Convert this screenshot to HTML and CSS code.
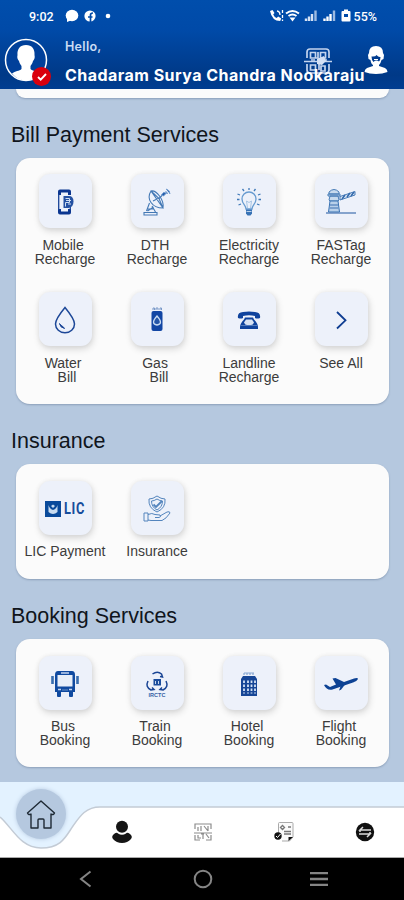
FILE: index.html
```html
<!DOCTYPE html>
<html lang="en">
<head>
  <meta charset="UTF-8">
  <meta name="viewport" content="width=device-width, initial-scale=1.0">
  <title>Services</title>
  <link rel="stylesheet" href="styles.css">
</head>
<body>
  <header>
    <div class="status">
      <span class="time">9:02</span>
      <svg class="notice" width="48" height="14" viewBox="0 0 48 14">
        <ellipse cx="7" cy="6.5" rx="6.3" ry="5.8" fill="#fff"/>
        <path d="M2 9v4l5-2z" fill="#fff"/>
        <circle cx="25" cy="7" r="5.6" fill="#fff"/>
        <path d="M25.500 13V6q0-2 2.500-2M23 8h4.500" fill="none" stroke="#004aa8" stroke-width="1.700"/>
        <circle cx="43" cy="7" r="2.300" fill="#fff"/>
      </svg>
      <svg class="signal" width="84" height="16" viewBox="0 0 84 16">
        <path d="M1 3l2.500-1 2 3-1.300 1.500q1 2.500 3.500 3.500l1.500-1.500 3 2-1 2.500Q3 13 1 3z" fill="#fff"/>
        <path d="M8 3q3 .5 3 4M13.500 2v3M13.500 7v3M13.500 11.500v1.500" fill="none" stroke="#fff" stroke-width="1.300"/>
        <path d="M17 5.500q6.500-5 13 0M19.500 8q4-3 8 0" fill="none" stroke="#fff" stroke-width="2"/>
        <path d="M20.500 9.500h6l-3 4z" fill="#fff"/>
        <path d="M37 13v-2.500M40 13V8.500M43 13V6" stroke="#d5e2f5" stroke-width="2.400"/>
        <path d="M46.500 13V2.500M65 13V2.500" stroke="#9dbbe2" stroke-width="2.400"/>
        <path d="M55.500 13v-2.500M58.500 13V8.500M61.500 13V6" stroke="#fff" stroke-width="2.400"/>
        <path d="M75 1.500h4V3h1.500q1 0 1 1v8.500q0 1-1 1h-7q-1 0-1-1V4q0-1 1-1H75z" fill="#fff"/>
        <path d="M75 6h4v3h-4z" fill="#004aa8"/>
      </svg>
      <span class="battery">55%</span>
    </div>
    <div class="user">
      <div class="avatar">
        <svg width="44" height="44" viewBox="0 0 44 44">
          <circle cx="22" cy="22" r="20.500" fill="#00409a" stroke="#fff" stroke-width="1.500"/>
          <path d="M22 7c-6 0-9 4-8.500 10-.8 3 .5 5 1.500 6 .7 3 2 4 2.500 5v3c-2 2-6.500 2-9.500 4.500Q14 42.500 22 42.500T36 35.500c-3-2.500-7.500-2.500-9.500-4.500v-3c.5-1 1.800-2 2.500-5 1-1 2.300-3 1.500-6C31 11 28 7 22 7z" fill="#fff"/>
        </svg>
        <span class="badge"><svg width="12" height="12" viewBox="0 0 12 12"><path d="M2 6l2.700 2.700L10 3" fill="none" stroke="#fff" stroke-width="1.900"/></svg></span>
      </div>
      <div class="hello">
        <p>Hello,</p>
        <h1>Chadaram Surya Chandra Nookaraju</h1>
      </div>
      <svg class="scan" width="30" height="28" viewBox="0 0 30 28">
        <g fill="none" stroke="#c3d4ee" stroke-width="1.700">
          <path d="M4 11V5q0-3 3-3h16q3 0 3 3v6M26 17v6q0 3-3 3H7q-3 0-3-3v-6M1 14.500h28"/>
          <path d="M7.500 5.500h5V11h-5zM17.500 5.500h5V11h-5zM7.500 18h5v5h-5zM15 5v6h-3M15 11l4 3M8 13h4M20 13h4M16 17v6M18 19h4v5h-4z"/>
        </g>
        <path d="M14 12l7-3 2 5-4 4-5-1z" fill="#d3e0f4"/>
      </svg>
      <svg class="support" width="24" height="28" viewBox="0 0 24 28">
        <path d="M12 0q7 0 7 7l1 2-.5 4-2 1q-1 4-2.500 5v1l6 2q2.500 1.500 2.500 4-5 2-11.500 2T.5 26q0-2.500 2.500-4l6-2v-1q-2-1-2.500-5l-2-1L4 9l1-2q0-7 7-7z" fill="#fff"/>
        <path d="M7.500 10.500q4 .5 5-1.500 2 2.500 4 2 0 3-1.500 4.500-3-2-5.500.500Q7.500 14 7.500 10.500z" fill="#003c8f"/>
        <path d="M10 13.500h4" stroke="#fff"/>
      </svg>
    </div>
  </header>

  <main>
    <div class="card prev"></div>

    <h2>Bill Payment Services</h2>
    <section class="card bills">
      <div class="item">
        <span class="tile"><svg width="30" height="30" viewBox="0 0 30 30">
          <path d="M8 8V4.500Q8 2.500 10 2.500h9q2 0 2 2V8M8 22v3.500q0 2 2 2h9q2 0 2-2V22" fill="#0b3690"/>
          <path d="M11 5.500h7v19h-7z" fill="#edf2fa"/>
          <path d="M8.700 7v16M20.300 20v3" stroke="#174297" stroke-width="1.300"/>
          <path d="M13.500 9H19q4.500 0 4.500 5.500t-5 6.500h-5z" fill="#2451a2"/>
          <path d="M15.500 11.500h4v4h-4v4M16 13.500h5M18 17h3" fill="none" stroke="#cfdef1"/>
        </svg></span>
        <p>Mobile 
Recharge</p>
      </div>
      <div class="item">
        <span class="tile"><svg width="30" height="30" viewBox="0 0 30 30">
          <g fill="none" stroke="#4479b5" stroke-width="1.100">
            <path d="M9 4c-5 8 1 17 12 17zM9 4q4-1 8.500 5t3.500 12M9 4l8 7.500L21 21M11 14l6-3"/>
            <path d="M17 11.500l4-4M7.500 16l-3 8M10 19l3.500 6M5 22h7M2 25.500h13v2.500H2zM5.500 24l6-4"/>
          </g>
          <path d="M19.500 8l2-2.500 3 .5-3 3zM24 2q4 1 4 5M23.500 4.500q2 .5 2 2.500" fill="#1c56a8" stroke="#6f9bce"/>
        </svg></span>
        <p>DTH 
Recharge</p>
      </div>
      <div class="item">
        <span class="tile"><svg width="30" height="30" viewBox="0 0 30 30">
          <path d="M12 22c0-4-4-5-4-10a7 7 0 0 1 14 0c0 5-4 6-4 10z" fill="none" stroke="#679bd0" stroke-width="1.300"/>
          <path d="M12 22.500h6v4l-1.500 2h-3L12 26.500z" fill="#3973b6"/>
          <path d="M12.500 24.500h5" stroke="#bcd2eb"/>
          <path d="M13.500 21l-1-7 2.500 1.500 2.500-1.500-1 7" fill="none" stroke="#a8c5e4"/>
          <path d="M15 3V1M10 4L8.500 2M20 4l1.500-2M6 8L3.500 7M24 8l2.500-1M5.500 12.500H3M24.500 12.500H27M7 17l-2.500 1M23 17l2.500 1" stroke="#3e78b8" stroke-width="1.300"/>
        </svg></span>
        <p>Electricity
Recharge</p>
      </div>
      <div class="item">
        <span class="tile"><svg width="34" height="30" viewBox="0 0 34 30">
          <path d="M5 5q5-5 10 0v2H5zM4 7h12v2H4zM6 9h8l1 4-1 1H6l-1-1z" fill="#c8dbee" stroke="#477cb7"/>
          <path d="M6 14h8l1.500 11H4.500z" fill="#b8d0ea" stroke="#3972b3"/>
          <path d="M6 18h8M5.500 21h9" stroke="#648fc4" stroke-width="1.500"/>
          <path d="M16 9.500l15-5v3.500l-15 5z" fill="#dce8f5" stroke="#386fb0" stroke-width=".9"/>
          <path d="M18 12l3-4M23 10l3-4M27 9l3-4" stroke="#3269ac" stroke-width="1.500"/>
          <path d="M2 26h30" stroke="#4c79b5" stroke-width="1.300"/>
        </svg></span>
        <p>FASTag
Recharge</p>
      </div>
      <div class="item">
        <span class="tile"><svg width="30" height="30" viewBox="0 0 30 30">
          <path d="M15 2.500Q5.500 14 5.500 19a9.500 8.800 0 0 0 19 0Q24.500 14 15 2.500z" fill="none" stroke="#1c4797" stroke-width="1.500"/>
          <path d="M9.500 18.500q.5 4 5 5-1-1.800-2.500-2.500t-2.500-2.500z" fill="#1c4797" stroke="#1c4797"/>
        </svg></span>
        <p>Water 
 Bill</p>
      </div>
      <div class="item">
        <span class="tile"><svg width="30" height="30" viewBox="0 0 30 30">
          <path d="M9.500 8q0-2 2-2h7q2 0 2 2v16q0 2-2 2h-7q-2 0-2-2z" fill="#1246a4"/>
          <path d="M11 5V3h1.500v2M14 5V3h2v2M18 5V3h1.500v2" fill="none" stroke="#7898c8"/>
          <path d="M15 11q-7 8 0 9 7-1 0-9z" fill="#2455a8" stroke="#c9dcf3" stroke-width="1.300"/>
        </svg></span>
        <p>Gas 
 Bill</p>
      </div>
      <div class="item">
        <span class="tile"><svg width="30" height="30" viewBox="0 0 30 30">
          <path d="M4 13q-1-5.500 5-6 6-1 12 0 6 .5 5 6-3 1-5 0v-2q-6-1.500-12 0v2q-2 1-5 0z" fill="#0f439d"/>
          <path d="M11 12.500h8l1 2q4 4 4 7.500v2H6v-2q0-3.500 4-7.500z" fill="#0f439d"/>
          <path d="M12 14.500h6l2 3q-1 2.500-3 2.500h-4q-2 0-3-2.500z" fill="#d8e3f3"/>
          <path d="M6.500 20.500h17" stroke="#7092c8" stroke-width=".7"/>
        </svg></span>
        <p>Landline
Recharge</p>
      </div>
      <div class="item">
        <span class="tile"><svg width="30" height="30" viewBox="0 0 30 30">
          <path d="M11 7l8.500 8.300L11 23.500" fill="none" stroke="#0f3d91" stroke-width="1.800"/>
        </svg></span>
        <p>See All</p>
      </div>
    </section>

    <h2>Insurance</h2>
    <section class="card insurance">
      <div class="item">
        <span class="tile lic"><svg width="16" height="16" viewBox="0 0 16 16">
          <path d="M0 0h16v16H0z" fill="#094a9b"/>
          <path d="M3.500 4q1 4 4.500 5 3.500-1 4.500-5v7q-4.500 4-9 0zM6 5l2-1.500L10 5l-2 2z" fill="#c9dcf0"/>
        </svg><b>LIC</b></span>
        <p>LIC Payment</p>
      </div>
      <div class="item">
        <span class="tile"><svg width="30" height="30" viewBox="0 0 30 30">
          <g fill="none" stroke="#5485bd">
            <path d="M15 2q4 3 8 3 1 9-8 13Q6 14 7 5q4 0 8-3zM15 5q3 2 5.500 2 0 6-5.500 9-5.500-3-5.500-9Q12 7 15 5z"/>
            <path d="M11.500 10.500l2.500 2.500 6-6" stroke-width="1.800"/>
            <path d="M2 19h4v8H2zM6 20.500q4-2 7 0l5 .5q1.500 2-1 2.500h-4M18 22l7-4q3-1 3 1-4 6-8 7.500H9l-3-.5"/>
          </g>
        </svg></span>
        <p>Insurance</p>
      </div>
    </section>

    <h2>Booking Services</h2>
    <section class="card booking">
      <div class="item">
        <span class="tile"><svg width="30" height="30" viewBox="0 0 30 30">
          <path d="M8 2h14q3 0 3 4v17H5V6q0-4 3-4zM7 23h4v4q0 1-1 1H8q-1 0-1-1zM19 23h4v4q0 1-1 1h-2q-1 0-1-1z" fill="#104aa0"/>
          <path d="M7.500 6h15v11.500h-15z" fill="#e8eff9"/>
          <path d="M11 4h8M8 20.500h3M19 20.500h3" stroke="#c2d5ef" stroke-width="1.500"/>
          <path d="M2.500 7v8M27.500 7v8" stroke="#386dae" stroke-width="2.600"/>
          <path d="M12 21h6" stroke="#6a91c5"/>
        </svg></span>
        <p>Bus 
Booking</p>
      </div>
      <div class="item">
        <span class="tile"><svg width="30" height="30" viewBox="0 0 30 30">
          <path d="M10.500 5q5-3.500 9 0l1 3-2.500-.5M6 12q-3 6 3 9l3-.5-2-2M24 12q3 6-3 9l-3-.5 2-2" fill="none" stroke="#194494" stroke-width="1.500"/>
          <path d="M11.500 10h7.500v6.500h-7.500z" fill="#1b4d9d"/>
          <path d="M13.500 12v3M16.500 12v3" stroke="#c8d9ef"/>
          <text x="15" y="28" text-anchor="middle" class="irctc">IRCTC</text>
        </svg></span>
        <p>Train 
Booking</p>
      </div>
      <div class="item">
        <span class="tile"><svg width="30" height="30" viewBox="0 0 30 30">
          <path d="M9 7h12l2 3v17H7V10z" fill="#174696"/>
          <path d="M10 6V4M13 6V4M16 6V4M19 6V4M10 4h10" fill="none" stroke="#87a7d2" stroke-width="1.200"/>
          <path d="M10 11.500v13M14 11.500v13M17.500 11.500v13M21 11.500v13" stroke="#d5e3f5" stroke-width="1.800" stroke-dasharray="2.500 1.500"/>
        </svg></span>
        <p>Hotel 
Booking</p>
      </div>
      <div class="item">
        <span class="tile"><svg width="36" height="30" viewBox="0 0 36 30">
          <path d="M1 16l2-.5 4 2.500 6-2.500-3.500-6 3-.5 8.500 4 10-3.500q4-1 4 .5-1 2-5 3.500L9.500 20.500Q4 22 1 16z" fill="#0d4294"/>
          <path d="M18 16l-2 5.500 2-.7 5-6.500z" fill="#0d4294"/>
        </svg></span>
        <p>Flight 
Booking</p>
      </div>
    </section>
  </main>

  <nav>
    <svg class="curve" width="404" height="75" viewBox="0 0 404 75">
      <path d="M0 35C12 45 20 66 41 66S66 54 73 44 86 25 100 25H404V75H0z" fill="#fff"/>
      <path d="M0 35C12 45 20 66 41 66S66 54 73 44 86 25 100 25H404" fill="none" stroke="#c3cbd5" stroke-width="1.500"/>
    </svg>
    <a class="home"><svg width="32" height="32" viewBox="0 0 32 32">
      <path d="M16 3L2.500 15q1 2.500 3.500 1v14h7V22q0-1 1-1h4q1 0 1 1v8h7V16q2.500 1.500 3.500-1z" fill="none" stroke="#1e2934" stroke-width="1.400" stroke-linejoin="round"/>
    </svg></a>
    <a><svg width="22" height="24" viewBox="0 0 22 24">
      <circle cx="11" cy="6.800" r="6" fill="#151515"/>
      <path d="M3 14q3-2 4-.5 4 2.500 8 0 1-1.500 4 .5 3 2.500 1 5-3.500 4-9 4t-9-4q-2-2.500 1-5z" fill="#151515"/>
    </svg></a>
    <a><svg width="20" height="20" viewBox="0 0 20 20">
      <path d="M2 7V2h5M7 2h11v5M18 13v5h-5M7 18H2v-5M1 11h18M5 5v4M8 4v5M11 4l4 5M15 4v5M5 13v3h3M10 12v5M13 12l3 4M8 12h3" fill="none" stroke="#8c8c8c" stroke-width="1.200"/>
    </svg></a>
    <a><svg width="20" height="20" viewBox="0 0 20 20">
      <path d="M4.500 11V1.500q0-1 1-1H18q1 0 1 1V15l-3.500 4H8" fill="#fafafa" stroke="#aaa"/>
      <path d="M6.500 5.500l2-2 2 2-2 2zM10 9.500h7M10 12h7M14 5h3" fill="none" stroke="#777" stroke-width="1.300"/>
      <circle cx="4" cy="14" r="3.700" fill="#111"/>
      <path d="M2 14l1.500 1.500L6.500 12" fill="none" stroke="#fff"/>
      <path d="M14.500 19v-4H19z" fill="#111"/>
    </svg></a>
    <a><svg width="20" height="20" viewBox="0 0 20 20">
      <circle cx="10" cy="10" r="9.200" fill="#111"/>
      <path d="M16 8H5l3-3M4 12h11l-3 3M5 8v2M15 10v2" fill="none" stroke="#ddd" stroke-width="1.500"/>
    </svg></a>
  </nav>

  <footer>
    <svg width="20" height="20" viewBox="0 0 20 20"><path d="M14.500 2.500L5 10l9.500 7.500" fill="none" stroke="#858585" stroke-width="2"/></svg>
    <svg width="20" height="20" viewBox="0 0 20 20"><circle cx="10" cy="10" r="8.300" fill="none" stroke="#858585" stroke-width="2"/></svg>
    <svg width="20" height="20" viewBox="0 0 20 20"><path d="M1 4.200h18M1 10h18M1 15.800h18" stroke="#858585" stroke-width="2.300"/></svg>
  </footer>
</body>
</html>
```

FILE: styles.css
```css
* {margin:0; padding:0; box-sizing:border-box;}
body{
  width: 404px;
  height: 900px;
  overflow: hidden;
  display: flex;
  flex-direction: column;
  background: #b5c8df;
  font-family: "Liberation Sans", Arial, sans-serif;
}
svg{display:block; flex-shrink:0;}

/* header */
header{
  height: 89px;
  flex-shrink: 0;
  background: linear-gradient(#004eac 0, #004aa8 30px, #003987 75px, #003d91 100%);
  color: #fff;
}
.status{
  height: 32px;
  padding: 0 27px 0 29px;
  display: flex;
  align-items: center;
  font: 500 12.5px Roboto, sans-serif;
}
.notice{margin-left:11px;}
.signal{margin-left:auto;}
.battery{margin-left:1px;}
.user{
  height: 57px;
  padding-left: 4px;
  display: flex;
  position: relative;
}
.avatar{
  width: 44px; height:44px;
  margin-top: 6px;
  position: relative;
}
.badge{
  width: 19px; height:19px;
  border-radius: 50%;
  background: #d9000d;
  display: flex;
  align-items: center;
  justify-content: center;
  position: absolute; left:28px; top:29px;
}
.hello{
  margin-left: 17px;
  white-space: nowrap;
  font-family: Inter, sans-serif;
  position: relative;
  z-index: 1;
}
.hello p{
  margin-top: 7px;
  font-size: 12.5px;
  font-weight: 600;
  line-height: 16px;
  letter-spacing: .3px;
  color: #cbdcf4;
}
.hello h1{
  margin-top: 10px;
  font-size: 16px;
  font-weight: 700;
  line-height: 20px;
  letter-spacing: .47px;
}
.scan{position:absolute; left:303px; top:15px;}
.support{position:absolute; left:364px; top:14px;}

/* services */
main{height:693px; padding:0 15px 0 16px;}
h2{
  margin-left: -5px;
  font-size: 21.5px;
  font-weight: 400;
  line-height: 24px;
  color: #10151c;
}
.card{
  background: #fbfbfb;
  border-radius: 14px;
  box-shadow: 0 1px 2px rgba(80,100,130,.4);
  display: grid;
  grid-template-columns: repeat(4, 92px);
  padding-left: 3px;
}
.prev{height:9px; border-radius:0 0 14px 14px; margin-bottom:25px;}
.bills{
  height: 246px;
  margin: 11px 0 25px;
  padding-top: 16px;
  grid-template-rows: 118px 118px;
}
.insurance{height:115px; margin:11px 0 25px; padding-top:17px;}
.booking{height:128px; margin-top:11px; padding-top:17px;}
.item{
  display: flex;
  flex-direction: column;
  align-items: center;
}
.tile{
  width: 53px; height:54px;
  border-radius: 11px;
  background: #edf1fa;
  box-shadow: 1px 3px 7px rgba(0,0,0,.15), 0 0 5px rgba(0,0,0,.05);
  display: flex;
  align-items: center;
  justify-content: center;
}
.tile svg{margin-top:1px;}
.item p{
  margin-top: 10px;
  font-size: 14px;
  line-height: 14px;
  text-align: center;
  white-space: pre;
  color: #3c3c3c;
}
.insurance p, .booking p{margin-top:9px;}
.lic{gap:3px;}
.lic b{
  width: 21px;
  font: 700 16px Roboto, sans-serif;
  letter-spacing: .8px;
  color: #174d9c;
  transform: scaleX(.8);
  transform-origin: left;
}
.irctc{font:700 5.5px "Liberation Sans", sans-serif; fill:#345fa4;}

/* bottom menu */
nav{
  height: 76px;
  flex-shrink: 0;
  background: #e3f2ff;
  border-bottom: 1px solid #aaa;
  display: grid;
  grid-template-columns: 81px repeat(4, 81px);
  position: relative;
}
nav a{
  padding-top: 25px;
  display: flex;
  align-items: center;
  justify-content: center;
  position: relative;
}
.curve{position:absolute; left:0; top:0;}
nav .home{
  width: 50px; height:50px;
  margin: 7px 0 0 16px;
  padding: 0;
  border-radius: 50%;
  background: #b5c8df;
  box-shadow: 0 0 4px #b5c8df;
}
footer{
  height: 42px;
  background: #000;
  padding: 0 75px 0 76px;
  display: flex;
  align-items: center;
  justify-content: space-between;
}
```
